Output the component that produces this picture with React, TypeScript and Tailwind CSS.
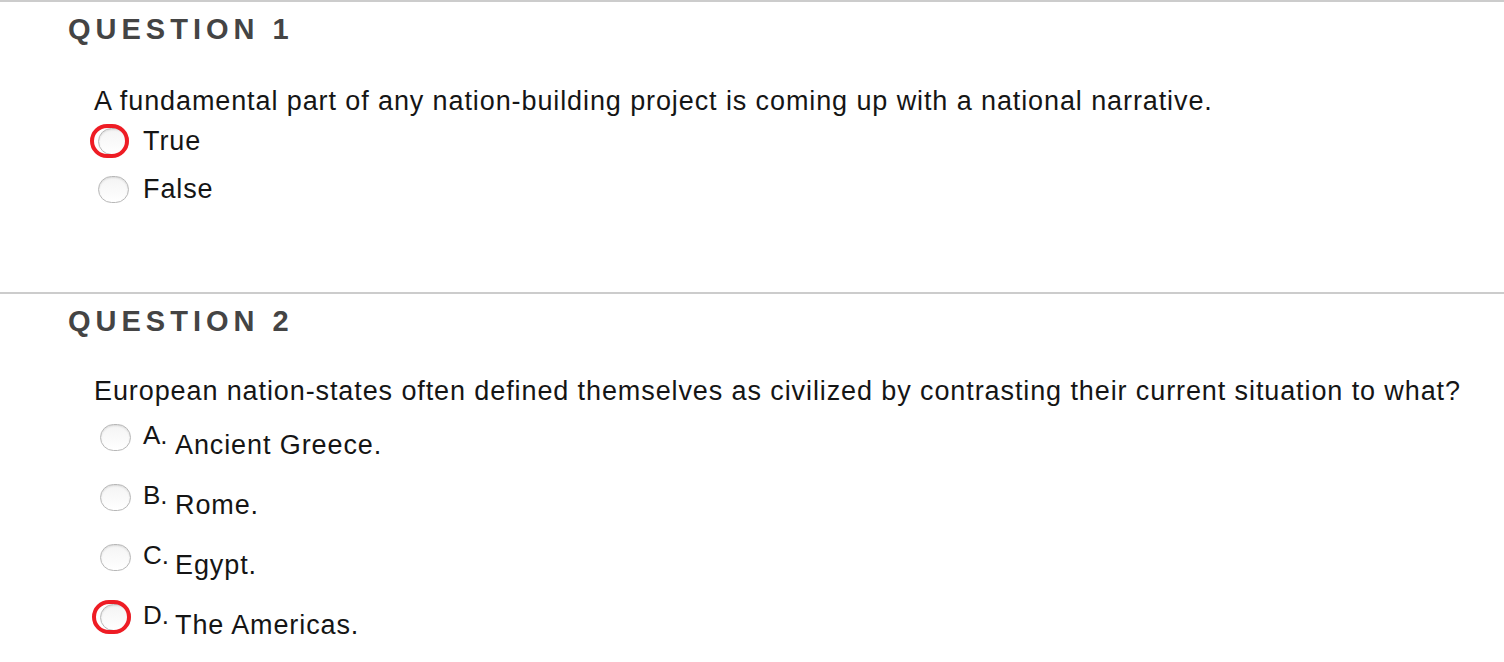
import React from "react";

type Option = {
  label?: string;
  text: string;
  marked?: boolean;
};

type Question = {
  num: number;
  prompt: string;
  options: Option[];
  lettered?: boolean;
};

const questions: Question[] = [
  {
    num: 1,
    prompt: "A fundamental part of any nation-building project is coming up with a national narrative.",
    options: [{ text: "True", marked: true }, { text: "False" }],
  },
  {
    num: 2,
    prompt:
      "European nation-states often defined themselves as civilized by contrasting their current situation to what?",
    lettered: true,
    options: [
      { label: "A.", text: "Ancient Greece." },
      { label: "B.", text: "Rome." },
      { label: "C.", text: "Egypt." },
      { label: "D.", text: "The Americas.", marked: true },
    ],
  },
];

// mac-style radio button, with optional red annotation ring drawn over it
function Radio({ marked }: { marked?: boolean }) {
  return (
    <span className="relative inline-block w-[31px] h-[27px] shrink-0">
      <span className="block w-full h-full rounded-full border border-[#b8b8b8] bg-gradient-to-b from-[#f4f4f4] to-white shadow-[inset_0_1px_2px_rgba(0,0,0,0.12)]" />
      {marked && (
        <span className="absolute -left-[8px] -top-[4px] w-[39px] h-[34px] rounded-full border-[4px] border-[#ee1c24]" />
      )}
    </span>
  );
}

export default function App() {
  return (
    <div className="w-[1504px] h-[662px] bg-white overflow-hidden font-['Liberation_Sans',Arial,sans-serif] text-[#151515]">
      {questions.map((q) => (
        <section key={q.num} className="border-t-2 border-[#cccccc] pl-[68px] h-[292px]">
          <h2 className="mt-[10px] text-[29px] leading-[34px] font-bold tracking-[5px] text-[#444]">
            QUESTION {q.num}
          </h2>
          <div className={q.lettered ? "pl-[26px] mt-[38px]" : "pl-[26px] mt-[40px]"}>
            <p className="text-[27px] leading-[30px] tracking-[0.9px]">{q.prompt}</p>
            {q.lettered ? (
              <div className="mt-[18px] flex flex-col gap-[26px]">
                {q.options.map((o) => (
                  <div key={o.text} className="flex items-start pl-[6px]">
                    <Radio marked={o.marked} />
                    <span className="ml-[12px] w-[32px] shrink-0 text-[26px] leading-[26px] -mt-[2px]">
                      {o.label}
                    </span>
                    <span className="text-[27px] leading-[26px] mt-[8px] tracking-[0.9px]">{o.text}</span>
                  </div>
                ))}
              </div>
            ) : (
              <div className="mt-[11px] flex flex-col gap-[20px]">
                {q.options.map((o) => (
                  <div key={o.text} className="flex items-center pl-[4px] h-[28px]">
                    <Radio marked={o.marked} />
                    <span className="ml-[14px] text-[27px] leading-[28px] tracking-[0.9px]">{o.text}</span>
                  </div>
                ))}
              </div>
            )}
          </div>
        </section>
      ))}
    </div>
  );
}
